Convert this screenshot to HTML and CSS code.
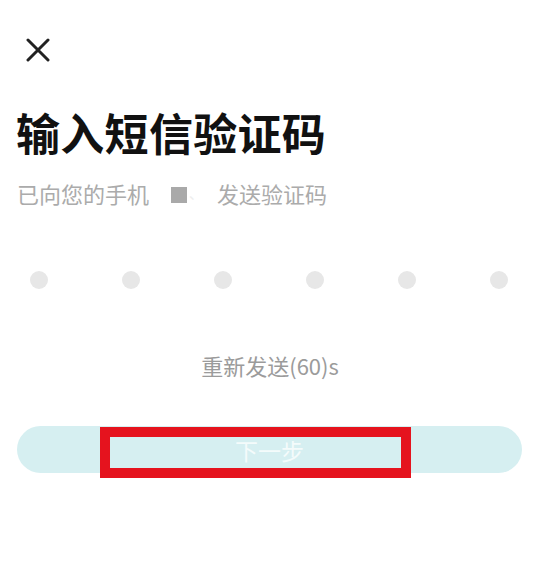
FILE: index.html
```html
<!DOCTYPE html>
<html lang="zh-CN">
<head>
<meta charset="utf-8">
<title>输入短信验证码</title>
<link rel="stylesheet" href="styles.css">
</head>
<body>
<div class="page">
  <div class="header">
    <svg class="close" width="24" height="24" viewBox="0 0 24 24" aria-label="关闭">
      <path d="M2 2 L22 22 M22 2 L2 22" stroke="#222" stroke-width="3" stroke-linecap="round" fill="none"/>
    </svg>
  </div>
  <h1 class="title">输入短信验证码</h1>
  <p class="subtitle"><span>已向您的手机</span><span class="masked"><span class="mask-block"></span><span class="mask-mark">、</span></span><span>发送验证码</span></p>
  <div class="dots">
    <span class="dot"></span><span class="dot"></span><span class="dot"></span><span class="dot"></span><span class="dot"></span><span class="dot"></span>
  </div>
  <p class="resend">重新发送(60)s</p>
  <div class="btn-wrap">
    <button class="next">下一步</button>
    <div class="highlight"></div>
  </div>
</div>
</body>
</html>
```

FILE: styles.css
```css
html, body {
  margin: 0;
  padding: 0;
  background: #ffffff;
}
body {
  font-family: "Noto Sans CJK SC", "Noto Sans", sans-serif;
  width: 538px;
  height: 586px;
  overflow: hidden;
}
.page {
  display: flex;
  flex-direction: column;
}
.header {
  padding: 38px 0 0 26px;
  height: 24px;
}
.close {
  display: block;
}
.title {
  margin: 48px 0 0 16px;
  font-size: 44px;
  line-height: 44px;
  font-weight: 700;
  color: #111111;
  letter-spacing: 0.3px;
}
.subtitle {
  margin: 28px 0 0 17px;
  font-size: 22px;
  line-height: 22px;
  color: #ababab;
  display: flex;
  align-items: center;
  white-space: nowrap;
}
.masked {
  display: flex;
  align-items: center;
  width: 68px;
  height: 22px;
  padding-left: 22px;
  box-sizing: border-box;
}
.mask-block {
  width: 16px;
  height: 16px;
  background: #a9a9a9;
  margin-top: 3px;
}
.mask-mark {
  color: #eeeeee;
  font-size: 14px;
  margin-left: 2px;
}
.dots {
  margin: 67px 30px 0 30px;
  display: flex;
  justify-content: space-between;
}
.dot {
  width: 18px;
  height: 18px;
  border-radius: 50%;
  background: #e7e7e7;
}
.resend {
  margin: 61px 0 0 0;
  text-align: center;
  font-size: 22px;
  line-height: 30px;
  color: #9b9b9b;
  padding-left: 2px;
}
.btn-wrap {
  position: relative;
  margin: 46px 16px 0 17px;
}
.next {
  display: block;
  width: 100%;
  height: 47px;
  border: none;
  border-radius: 24px;
  background: #d6eff1;
  color: #f4fbfb;
  font-family: "Noto Sans CJK SC", "Noto Sans", sans-serif;
  font-size: 23px;
  padding: 0;
}
.highlight {
  position: absolute;
  left: 83px;
  top: 1px;
  width: 311px;
  height: 51px;
  border: 10px solid #e5131e;
  box-sizing: border-box;
}
```
